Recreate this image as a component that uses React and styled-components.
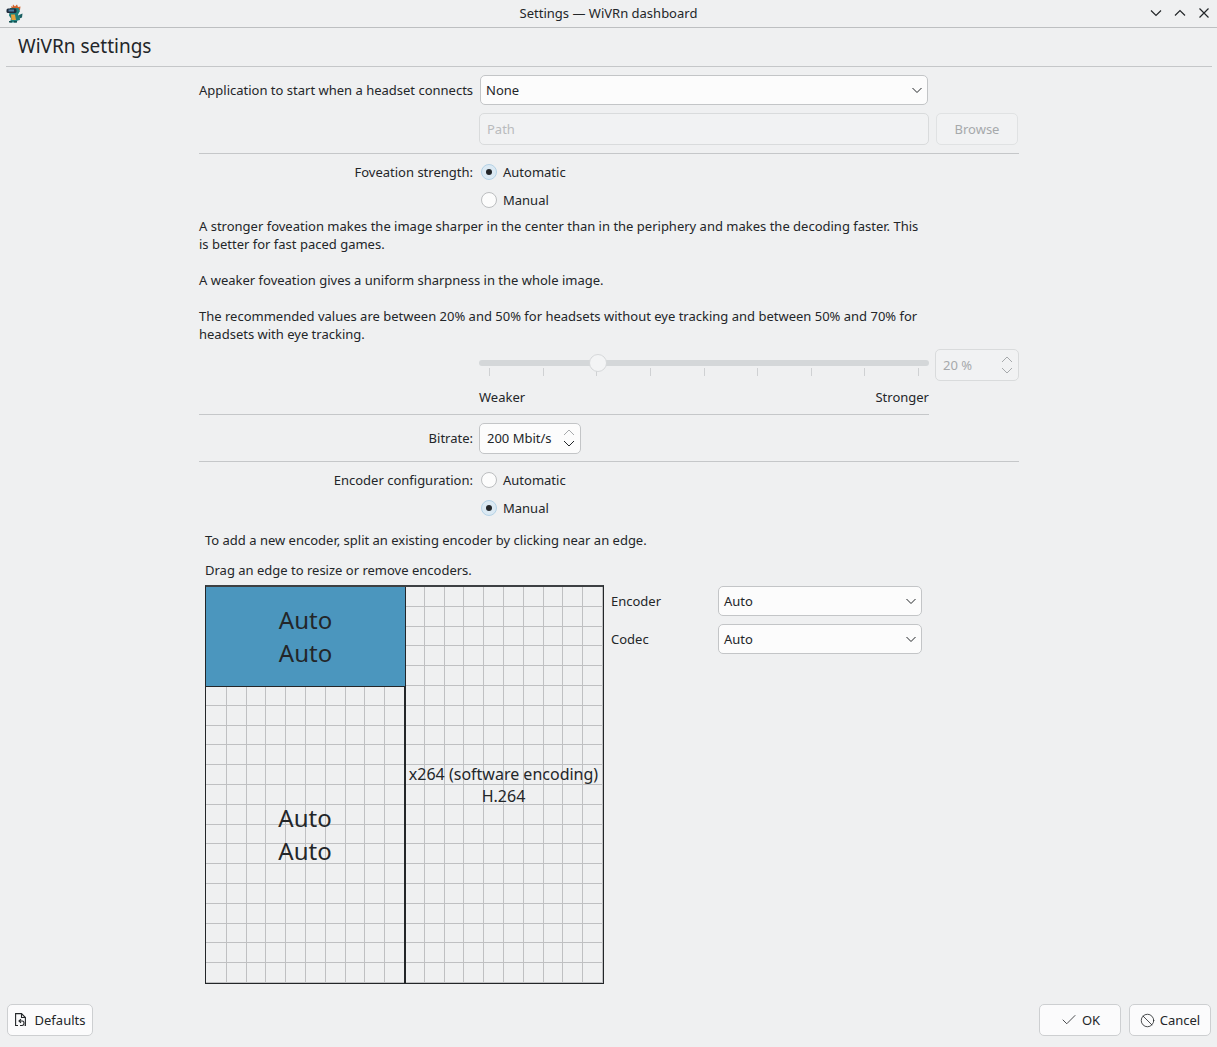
import styled, { createGlobalStyle } from "styled-components";
import { Check, Ban } from "lucide-react";

const GlobalStyle = createGlobalStyle`
  html, body { margin: 0; padding: 0; height: 100%; }
  body {
    background: #eff0f1;
    color: #232629;
    font-family: "Noto Sans", sans-serif;
    font-size: 13px;
    line-height: 18px;
  }
`;

const Window = styled.div`
  height: 1047px;
  display: flex;
  flex-direction: column;
  overflow: hidden;
`;

const TitleBar = styled.header`
  flex: none;
  padding-bottom: 1px;
  height: 26px;
  border-bottom: 1px solid #bdbfc1;
  display: flex;
  align-items: center;
  justify-content: center;
  position: relative;
`;

const Logo = styled.svg`
  position: absolute;
  left: 6px;
  top: 4px;
`;

const WindowButtons = styled.div`
  position: absolute;
  right: 7px;
  top: 7px;
  display: flex;
  gap: 12px;
`;

const Heading = styled.h1`
  margin: 0 5px 0 6px;
  height: 39px;
  flex: none;
  box-sizing: border-box;
  padding: 0 12px;
  border-bottom: 1px solid #c5c7c9;
  font-size: 19px;
  font-weight: 400;
  line-height: 36px;
`;

const Content = styled.main`
  width: 820px;
  margin-left: 199px;
  padding-top: 8px;
`;

const FormRow = styled.div`
  display: grid;
  grid-template-columns: 274px 1fr;
  column-gap: 6px;
  align-items: center;
  height: ${(p) => p.$height || 28}px;
  margin-top: ${(p) => p.$top || 0}px;
`;

const Label = styled.label`
  text-align: right;
  white-space: nowrap;
  padding-bottom: ${(p) => p.$lift || 0}px;
`;

const Field = styled.div`
  display: flex;
  align-items: center;
  gap: 7px;
  min-width: 0;
`;

const Combo = styled.div`
  box-sizing: border-box;
  width: ${(p) => p.$width}px;
  height: 30px;
  margin-left: ${(p) => p.$shift || 0}px;
  padding: 0 4px 0 5px;
  background: #fcfcfc;
  border: 1px solid #c3c5c7;
  border-radius: 5px;
  display: flex;
  align-items: center;
  justify-content: space-between;
`;

const PathInput = styled.div`
  box-sizing: border-box;
  width: 450px;
  height: 32px;
  padding: 0 7px;
  background: #f1f2f3;
  border: 1px solid #d9dbdc;
  border-radius: 5px;
  color: #b9bbbd;
  display: flex;
  align-items: center;
`;

const DisabledButton = styled.div`
  box-sizing: border-box;
  width: 82px;
  height: 32px;
  background: #f1f2f3;
  border: 1px solid #e0e2e3;
  border-radius: 5px;
  color: #a6a9ab;
  display: flex;
  align-items: center;
  justify-content: center;
`;

const Separator = styled.hr`
  border: 0;
  height: 1px;
  background: #c5c7c9;
  width: ${(p) => p.$width || 820}px;
  margin: ${(p) => p.$top}px 0 ${(p) => p.$bottom}px;
`;

const RadioOption = styled.div`
  display: flex;
  align-items: center;
  gap: 6px;
  padding-left: 2px;
`;

const RadioMark = styled.span`
  box-sizing: border-box;
  width: 16px;
  height: 16px;
  border-radius: 50%;
  background: ${(p) => (p.$checked ? "#dbe9f3" : "#fcfcfc")};
  border: 1px solid ${(p) => (p.$checked ? "#b4d2e6" : "#bcbec0")};
  display: flex;
  align-items: center;
  justify-content: center;

  &::after {
    content: "";
    display: ${(p) => (p.$checked ? "block" : "none")};
    width: 6px;
    height: 6px;
    border-radius: 50%;
    background: #232629;
  }
`;

const Help = styled.p`
  margin: ${(p) => p.$top || 0}px 0 0;
  padding-left: ${(p) => p.$indent || 0}px;
  width: 730px;
`;

const SliderRow = styled.div`
  display: flex;
  height: 32px;
  margin-top: 6px;
  padding-left: 280px;
  gap: 6px;
`;

const Slider = styled.div`
  width: 450px;
  position: relative;
`;

const Track = styled.div`
  height: 6px;
  margin-top: 11px;
  border-radius: 3px;
  background: #d4d7d9;
`;

const Handle = styled.div`
  position: absolute;
  left: 110px;
  top: 5px;
  box-sizing: border-box;
  width: 18px;
  height: 18px;
  border-radius: 50%;
  background: #f3f4f5;
  border: 1px solid #d6d8da;
`;

const Ticks = styled.div`
  display: flex;
  justify-content: space-between;
  padding: 2px 10px 0;
`;

const Tick = styled.span`
  width: 1px;
  height: 8px;
  background: #cfd1d3;
`;

const SpinBox = styled.div`
  box-sizing: border-box;
  width: ${(p) => p.$width}px;
  height: ${(p) => p.$height}px;
  padding: 0 5px ${(p) => p.$height % 2}px 7px;
  align-self: start;
  background: ${(p) => (p.$disabled ? "#f1f2f3" : "#fcfcfc")};
  border: 1px solid ${(p) => (p.$disabled ? "#d9dbdc" : "#c3c5c7")};
  border-radius: 5px;
  color: ${(p) => (p.$disabled ? "#a6a9ab" : "#232629")};
  display: flex;
  align-items: center;
  justify-content: space-between;
`;

const SliderLabels = styled.div`
  display: flex;
  justify-content: space-between;
  width: 450px;
  margin: 7px 0 0 280px;
`;

const EncoderArea = styled.div`
  display: flex;
  align-items: flex-start;
  margin: 6px 0 0 6px;
`;

const Canvas = styled.div`
  position: relative;
  width: 399px;
  height: 399px;
  flex: none;
  box-sizing: border-box;
  border: 1px solid #232629;
  border-top: 2px solid #3d4043;
  display: grid;
  grid-template-columns: 200px 1fr;
  grid-template-rows: 100px 1fr;
`;

const GridLines = styled.svg`
  position: absolute;
  left: 0;
  top: 0;
`;

const Cell = styled.div`
  position: relative;
  min-width: 0;
  box-sizing: border-box;
  display: flex;
  flex-direction: column;
  align-items: center;
  justify-content: center;
  text-align: center;
  white-space: nowrap;
  padding: ${(p) => (p.$small ? "0 2px 0 0" : "0 0 2px")};
  font-size: ${(p) => (p.$small ? 16 : 24)}px;
  line-height: ${(p) => (p.$small ? 22 : 33)}px;
  background: ${(p) => (p.$selected ? "#4b96be" : "transparent")};
  border-right: ${(p) => (p.$selected ? "1px" : p.$edge ? "2px" : "0")} solid #232629;
  border-bottom: ${(p) => (p.$selected ? "1px solid #232629" : "0")};
  grid-row: ${(p) => p.$rows || "auto"};
  grid-column: ${(p) => p.$col || "auto"};
`;

const EncoderForm = styled.div`
  margin-left: 7px;
  display: grid;
  grid-template-columns: 107px 204px;
  row-gap: 8px;
  align-items: center;
  padding-top: 1px;
`;

const Footer = styled.footer`
  margin-top: auto;
  padding: 0 6px 11px 7px;
  display: flex;
  justify-content: space-between;
`;

const FooterGroup = styled.div`
  display: flex;
  gap: 8px;
`;

const PushButton = styled.button`
  box-sizing: border-box;
  width: ${(p) => p.$width}px;
  height: 32px;
  padding: 0;
  background: #fbfbfc;
  border: 1px solid #cdcfd1;
  border-radius: 5px;
  color: #232629;
  font: inherit;
  display: flex;
  align-items: center;
  justify-content: center;
  gap: ${(p) => p.$gap}px;
`;

const Chevron = () => (
  <svg width="12" height="7" viewBox="0 0 12 7" fill="none" stroke="#232629" strokeWidth="1">
    <path d="M1.5 1l4.5 4.5L10.5 1" />
  </svg>
);

const Arrows = ({ up, down }) => (
  <svg width="12" height="20" viewBox="0 0 12 20" fill="none" strokeWidth="1">
    <path d="M1 7l5-5 5 5" stroke={up} />
    <path d="M1 13l5 5 5-5" stroke={down} />
  </svg>
);

const WinIcon = ({ d }) => (
  <svg width="12" height="12" viewBox="0 0 12 12" fill="none" stroke="#232629" strokeWidth="1.2">
    <path d={d} />
  </svg>
);

const RevertIcon = () => (
  <svg width="11" height="14" viewBox="0 0 11 14" fill="none" stroke="#232629" strokeWidth="1.1">
    <path d="M3 12.5H.6V.6H6.5L10.4 4.5V12.5H9.6" />
    <path d="M6.5.6V4.5H10.4" />
    <path d="M6 6.2L4 8l2 1.8M4.2 8H7.4C9.6 8 9.6 12.5 7 12.5H5" />
  </svg>
);

const AppLogo = () => (
  <Logo width="17" height="19" viewBox="0 0 17 19">
    <path d="M5 2l1.5 1L7 .5l2 2L11 .5l1 2.5 2.5-.5L14 6H6z" fill="#d2622a" />
    <path d="M4 4h8.5l1.5 3-2 3.5 1.5 2 .5 3.5-2.5.5-1 2H4l1-4-2-3z" fill="#1f7f7c" />
    <rect x="0.5" y="4.5" width="10" height="4.5" rx="1.5" fill="#1f2c3c" />
    <rect x="2.5" y="5.5" width="5.5" height="2" fill="#4f7fa6" />
    <path d="M5 10.5h4l1 5.5H5.5z" fill="#e6a23a" />
    <path d="M13 11l3.5-1.5-.5 4-2.5 1z" fill="#1a5f62" />
    <path d="M3 17h3v1.5H3zM8 17h3v1.5H8z" fill="#134e50" />
  </Logo>
);

// lines sit in the canvas' padding box, which starts 1px right and 2px below its corner
const CanvasGrid = () => {
  const steps = Array.from({ length: 20 }, (_, i) => 20.3 + i * 19.8);
  return (
    <GridLines width="397" height="396" viewBox="0 0 397 396" stroke="#bfc0c2" strokeWidth="1">
      {steps.map((v) => (
        <g key={v}>
          <line x1={Math.floor(v) + 0.5} y1="0" x2={Math.floor(v) + 0.5} y2="396" />
          <line x1="0" y1={Math.floor(v - 1) + 0.5} x2="397" y2={Math.floor(v - 1) + 0.5} />
        </g>
      ))}
    </GridLines>
  );
};

export default function App() {
  const ticks = [0, 1, 2, 3, 4, 5, 6, 7, 8];
  return (
    <Window>
      <GlobalStyle />
      <TitleBar>
        <AppLogo />
        Settings — WiVRn dashboard
        <WindowButtons>
          <WinIcon d="M1 3.5l5 5 5-5" />
          <WinIcon d="M1 8.5l5-5 5 5" />
          <WinIcon d="M1.5 1.5l9 9M10.5 1.5l-9 9" />
        </WindowButtons>
      </TitleBar>
      <Heading>WiVRn settings</Heading>

      <Content>
        <FormRow $height={30}>
          <Label>Application to start when a headset connects</Label>
          <Combo $width={448} $shift={1}>
            None
            <Chevron />
          </Combo>
        </FormRow>
        <FormRow $height={32} $top={8}>
          <span />
          <Field>
            <PathInput>Path</PathInput>
            <DisabledButton>Browse</DisabledButton>
          </Field>
        </FormRow>
        <Separator $top={8} $bottom={4} />

        <FormRow>
          <Label>Foveation strength:</Label>
          <RadioOption>
            <RadioMark $checked />
            Automatic
          </RadioOption>
        </FormRow>
        <FormRow>
          <span />
          <RadioOption>
            <RadioMark />
            Manual
          </RadioOption>
        </FormRow>

        <Help $top={3}>
          A stronger foveation makes the image sharper in the center than in the periphery and makes the decoding
          faster. This is better for fast paced games.
        </Help>
        <Help $top={18}>A weaker foveation gives a uniform sharpness in the whole image.</Help>
        <Help $top={18}>
          The recommended values are between 20% and 50% for headsets without eye tracking and between 50% and 70%
          for headsets with eye tracking.
        </Help>

        <SliderRow>
          <Slider>
            <Track />
            <Ticks>
              {ticks.map((t) => (
                <Tick key={t} />
              ))}
            </Ticks>
            <Handle />
          </Slider>
          <SpinBox $width={84} $height={32} $disabled>
            20 %
            <Arrows up="#a6a9ab" down="#a6a9ab" />
          </SpinBox>
        </SliderRow>
        <SliderLabels>
          <span>Weaker</span>
          <span>Stronger</span>
        </SliderLabels>
        <Separator $width={730} $top={8} $bottom={8} />

        <FormRow $height={30}>
          <Label $lift={2}>Bitrate:</Label>
          <SpinBox $width={102} $height={31}>
            200 Mbit/s
            <Arrows up="#a6a9ab" down="#232629" />
          </SpinBox>
        </FormRow>
        <Separator $top={8} $bottom={4} />

        <FormRow>
          <Label>Encoder configuration:</Label>
          <RadioOption>
            <RadioMark />
            Automatic
          </RadioOption>
        </FormRow>
        <FormRow>
          <span />
          <RadioOption>
            <RadioMark $checked />
            Manual
          </RadioOption>
        </FormRow>

        <Help $top={9} $indent={6}>
          To add a new encoder, split an existing encoder by clicking near an edge.
        </Help>
        <Help $top={12} $indent={6}>
          Drag an edge to resize or remove encoders.
        </Help>

        <EncoderArea>
          <Canvas>
            <CanvasGrid />
            <Cell $selected>
              <span>Auto</span>
              <span>Auto</span>
            </Cell>
            <Cell $small $rows="1 / span 2" $col="2">
              <span>x264 (software encoding)</span>
              <span>H.264</span>
            </Cell>
            <Cell $edge $col="1" $rows="2">
              <span>Auto</span>
              <span>Auto</span>
            </Cell>
          </Canvas>
          <EncoderForm>
            <span>Encoder</span>
            <Combo $width={204}>
              Auto
              <Chevron />
            </Combo>
            <span>Codec</span>
            <Combo $width={204}>
              Auto
              <Chevron />
            </Combo>
          </EncoderForm>
        </EncoderArea>
      </Content>

      <Footer>
        <PushButton $width={86} $gap={9}>
          <RevertIcon />
          Defaults
        </PushButton>
        <FooterGroup>
          <PushButton $width={82} $gap={4}>
            <Check size={18} strokeWidth={1.1} />
            OK
          </PushButton>
          <PushButton $width={82} $gap={5}>
            <Ban size={15} strokeWidth={1.3} />
            Cancel
          </PushButton>
        </FooterGroup>
      </Footer>
    </Window>
  );
}
